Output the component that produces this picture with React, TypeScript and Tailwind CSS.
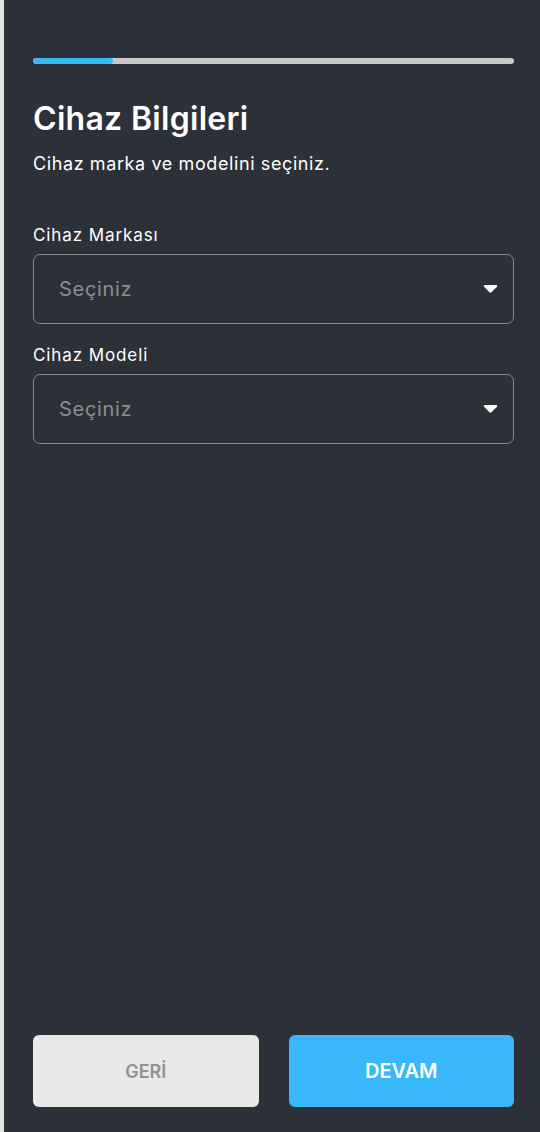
const FIELDS = [
  { id: "brand", label: "Cihaz Markası" },
  { id: "model", label: "Cihaz Modeli" },
];

function Caret() {
  return (
    <svg width="15" height="10" viewBox="0 0 15 10" className="shrink-0">
      <path
        d="M1.8 1h11.4c1 0 1.4 1.1.8 1.7L8.2 8.6c-.4.4-1 .4-1.4 0L1 2.7C.4 2.1.8 1 1.8 1z"
        fill="#ffffff"
      />
    </svg>
  );
}

export default function App() {
  return (
    <div
      className="flex min-h-screen bg-[#2c3038] text-white"
      style={{ fontFamily: 'Inter, "Noto Sans", sans-serif' }}
    >
      <div className="w-[4px] shrink-0 bg-[#e2e2e2]" />
      <main className="flex min-h-screen flex-1 flex-col pb-[25px] pl-[29px] pr-[26px] pt-[58px]">
        <div className="flex h-[6px] w-full overflow-hidden rounded-full bg-[#c8c9cb]">
          <div className="h-full w-[80px] rounded-full bg-[#38b8fb]" />
        </div>

        <h1 className="mt-[36px] text-[32px] font-semibold leading-[38px] tracking-[0.3px]">
          Cihaz Bilgileri
        </h1>
        <p className="mt-[14px] text-[18px] leading-[24px] tracking-[0.6px]">
          Cihaz marka ve modelini seçiniz.
        </p>

        <div className="mt-[48px] flex flex-col gap-[20px]">
          {FIELDS.map((field) => (
            <div key={field.id}>
              <label
                htmlFor={field.id}
                className="block text-[17px] leading-[22px] tracking-[0.9px]"
              >
                {field.label}
              </label>
              <button
                id={field.id}
                type="button"
                className="mt-[8px] flex h-[70px] w-full items-center justify-between rounded-[7px] border border-[#878a90] pl-[25px] pr-[15px]"
              >
                <span className="text-[20px] tracking-[0.7px] text-[#8b8d92]">Seçiniz</span>
                <Caret />
              </button>
            </div>
          ))}
        </div>

        <div className="mt-auto grid grid-cols-2 gap-[30px]">
          <button
            type="button"
            className="h-[72px] rounded-[6px] bg-[#e9e9e9] text-[18px] font-semibold text-[#909296]"
          >
            GERİ
          </button>
          <button
            type="button"
            className="h-[72px] rounded-[6px] bg-[#38b8fb] text-[20px] font-semibold text-white"
          >
            DEVAM
          </button>
        </div>
      </main>
    </div>
  );
}
